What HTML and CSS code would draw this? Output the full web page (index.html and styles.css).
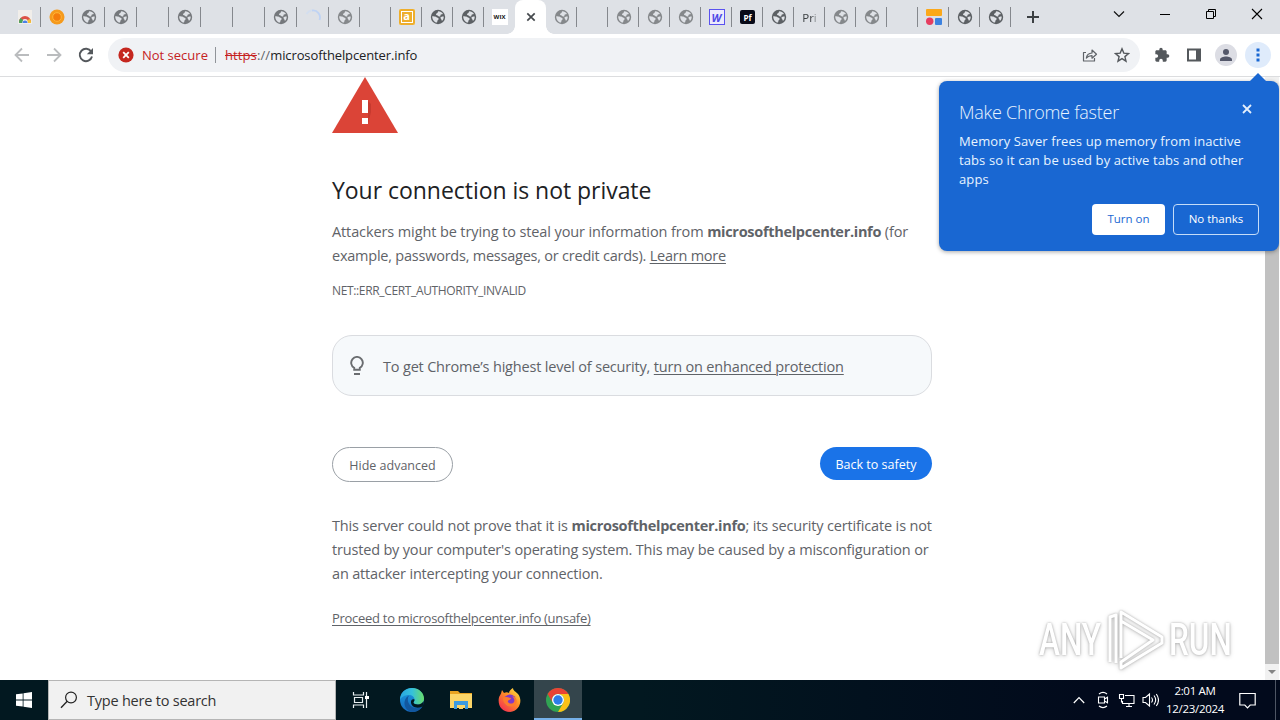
FILE: index.html
```html
<!DOCTYPE html>
<html lang="en">

<head>
    <meta charset="UTF-8">
    <meta name="viewport" content="width=device-width, initial-scale=1.0">
    <title>Privacy error</title>
    <link rel="stylesheet" href="styles.css">
</head>

<body>
    <svg class="defs" width="0" height="0">
        <symbol id="globe" viewBox="0 0 16 16">
            <circle cx="8" cy="8" r="7.2" fill="currentColor" />
            <path d="M2.200 7.200C3.600 7.500 5 7 6.200 8c.9.800 2.300.7 2.500 1.800.2 1-1 1.100-1.300 2-.2.600 0 1.200-.4 1.800C4 13.200 2.200 10.500 2.200 7.200zM8.300 2.200c2 .1 3.600 1 4.600 2.500-.6.800-1.700.4-2.300 1-.5.600.2 1.200-.3 1.600-.6.500-1.500.1-2.100-.4C7.500 6.300 6.300 6.600 6 5.600c-.2-1 1-1.200 1.500-1.800.4-.5.300-1.200.8-1.600zM13.700 7.400c.1 1.700-.5 3.200-1.600 4.400-.7-.3-.5-1.300-1-1.800-.4-.5-.9-.8-.7-1.400.4-1 2.100-1.300 3.300-1.200z" fill="#dee1e6" />
        </symbol>
    </svg>

    <div class="tabstrip">
        <div class="tab"><svg class="favicon" viewBox="0 0 16 16"><path d="M1 1h14v14H1z" fill="#f1eeea" /><path d="M2 13a6 6 0 0 1 12 0h-3a3 3 0 0 0-6 0z" fill="#dd5144" /><path d="M2 14a6 6 0 0 1 1.500-5l2.500 2-1 3z" fill="#48a45c" /><path d="M14 14a6 6 0 0 0-1-4l-2.500 1 .5 3z" fill="#f3c238" /><path d="M5.500 14a2.500 2.500 0 0 1 5 0z" fill="#4a80e8" /></svg></div>
        <div class="tab"><svg class="favicon" viewBox="0 0 16 16"><circle cx="8" cy="8" r="7.500" fill="#f59a1c" /><circle cx="8" cy="8" r="4.300" fill="#f47d0c" stroke="#ffb638" /></svg></div>
        <div class="tab"><svg class="favicon"><use href="#globe" /></svg></div>
        <div class="tab"><svg class="favicon"><use href="#globe" /></svg></div>
        <div class="tab"></div>
        <div class="tab"><svg class="favicon"><use href="#globe" /></svg></div>
        <div class="tab"></div>
        <div class="tab"></div>
        <div class="tab"><svg class="favicon"><use href="#globe" /></svg></div>
        <div class="tab"><svg class="favicon" viewBox="0 0 16 16"><path d="M1.500 5a7 7 0 0 1 5-3.500" fill="none" stroke="#d3deef" stroke-width="1.800" /><path d="M7 1.500a7 7 0 0 1 7.500 9.500" fill="none" stroke="#bfd3f4" stroke-width="1.800" /></svg></div>
        <div class="tab narrow"><svg class="favicon light"><use href="#globe" /></svg></div>
        <div class="tab narrow"></div>
        <div class="tab narrow"><span class="badge at">a</span></div>
        <div class="tab narrow"><svg class="favicon dark"><use href="#globe" /></svg></div>
        <div class="tab narrow"><svg class="favicon dark"><use href="#globe" /></svg></div>
        <div class="tab narrow last"><span class="badge wix">WIX</span></div>
        <div class="tab narrow active"><svg width="10" height="10" viewBox="0 0 10 10"><path d="M1.300 1.300l7.400 7.400M8.700 1.300L1.300 8.700" stroke="#45494d" stroke-width="1.700" /></svg></div>
        <div class="tab narrow"><svg class="favicon light"><use href="#globe" /></svg></div>
        <div class="tab narrow"></div>
        <div class="tab narrow"><svg class="favicon light"><use href="#globe" /></svg></div>
        <div class="tab narrow"><svg class="favicon light"><use href="#globe" /></svg></div>
        <div class="tab narrow"><svg class="favicon light"><use href="#globe" /></svg></div>
        <div class="tab narrow"><span class="badge w">W</span></div>
        <div class="tab narrow"><span class="badge pf">Pf</span></div>
        <div class="tab narrow"><svg class="favicon dark"><use href="#globe" /></svg></div>
        <div class="tab narrow"><span class="tab-title">Pri</span></div>
        <div class="tab narrow"><svg class="favicon light"><use href="#globe" /></svg></div>
        <div class="tab narrow"><svg class="favicon light"><use href="#globe" /></svg></div>
        <div class="tab narrow"></div>
        <div class="tab narrow"><svg class="favicon" viewBox="0 0 16 16"><rect y="0" width="16" height="7" rx="1" fill="#fba81a" /><circle cx="3.700" cy="12.300" r="3.700" fill="#e63d60" /><rect x="9" y="9" width="7" height="7" rx="1" fill="#3c82e0" /></svg></div>
        <div class="tab narrow"><svg class="favicon dark"><use href="#globe" /></svg></div>
        <div class="tab narrow"><svg class="favicon dark"><use href="#globe" /></svg></div>
        <svg class="new-tab" width="12" height="12" viewBox="0 0 12 12"><path d="M6 0v12M0 6h12" stroke="#3c4043" stroke-width="2" /></svg>
        <div class="window-controls">
            <svg width="12" height="28" viewBox="0 0 12 28"><path d="M1 11.500l5 5 5-5" fill="none" stroke="#111" stroke-width="1.200" /></svg>
            <svg width="12" height="28" viewBox="0 0 12 28"><path d="M1 14.500h10" stroke="#000" /></svg>
            <svg width="12" height="28" viewBox="0 0 12 28"><path d="M1.500 11.500h7v7h-7zM3.500 11.500v-2h7v7h-2" fill="none" stroke="#000" /></svg>
            <svg width="12" height="28" viewBox="0 0 12 28"><path d="M1 9l10 10M11 9L1 19" stroke="#000" stroke-width="1.100" /></svg>
        </div>
    </div>

    <div class="toolbar">
        <div class="nav">
            <svg width="16" height="16" viewBox="0 0 16 16"><path d="M15 8H2M8 1.500L1.500 8 8 14.500" fill="none" stroke="#babcbe" stroke-width="1.800" /></svg>
            <svg width="16" height="16" viewBox="0 0 16 16"><path d="M1 8h13M8 1.500L14.500 8 8 14.500" fill="none" stroke="#babcbe" stroke-width="1.800" /></svg>
            <svg width="16" height="16" viewBox="0 0 16 16"><path d="M13.200 4.600A6.200 6.200 0 1 0 14 9.500" fill="none" stroke="#54585c" stroke-width="1.900" /><path d="M15 1v6.200H8.800z" fill="#54585c" /></svg>
        </div>
        <div class="omnibox">
            <svg class="danger" width="16" height="16" viewBox="0 0 16 16"><circle cx="8" cy="8" r="7.600" fill="#c5271f" /><path d="M5.200 5.200l5.600 5.600M10.800 5.200l-5.600 5.600" stroke="#fff" stroke-width="1.800" /></svg>
            <span class="not-secure">Not secure</span>
            <span class="divider"></span>
            <span class="url"><s>https</s><i>://</i>microsofthelpcenter.info</span>
            <svg class="share" width="16" height="16" viewBox="0 0 16 16"><path d="M4 5.500H1.500v8.500h11v-3M4.300 11c.5-3.300 2.500-4.800 5.700-5V3l4.500 4.200-4.500 4V8.600c-2.500 0-4.200.7-5.700 2.400z" fill="none" stroke="#5f6368" stroke-width="1.200" stroke-linejoin="round" /></svg>
            <svg width="16" height="16" viewBox="0 0 16 16"><path d="M8 1.800l1.800 4.300 4.700.4-3.600 3.100 1.100 4.600-4-2.500-4 2.500 1.100-4.600L1.500 6.500l4.700-.4z" fill="none" stroke="#54585c" stroke-width="1.400" /></svg>
        </div>
        <div class="actions">
            <svg width="16" height="16" viewBox="0 0 24 24"><path d="M20.500 11H19V7c0-1.100-.9-2-2-2h-4V3.500a2.500 2.500 0 0 0-5 0V5H4c-1.100 0-2 .9-2 2v3.800h1.500a2.700 2.700 0 0 1 0 5.400H2V20c0 1.100.9 2 2 2h3.800v-1.500a2.700 2.700 0 0 1 5.400 0V22H17c1.100 0 2-.9 2-2v-4h1.500a2.500 2.500 0 0 0 0-5z" fill="#54585c" /></svg>
            <svg width="16" height="16" viewBox="0 0 16 16"><path d="M2 2.500h12v11H2z" fill="none" stroke="#54585c" stroke-width="2" /><path d="M10 2h4v12h-4z" fill="#54585c" /></svg>
            <span class="round profile"><svg width="14" height="14" viewBox="0 0 14 14"><circle cx="7" cy="4" r="3" fill="#54586a" /><path d="M1 13v-1.500C1 9.500 4.500 8.500 7 8.500s6 1 6 3V13z" fill="#54586a" /></svg></span>
            <span class="round more"><svg width="4" height="14" viewBox="0 0 4 14"><path d="M.5 .5h3v3h-3zM.5 5.500h3v3h-3zM.5 10.500h3v3h-3z" fill="#1967d2" /></svg></span>
        </div>
    </div>

    <div class="page">
        <div class="interstitial">
            <svg class="warning" width="66" height="56" viewBox="0 0 66 56"><path d="M33 0l33 56H0z" fill="#db4437" /><path d="M36 24l3 3v8l-3 12z" fill="#c63a2f" /><path d="M30 23h6v13h-6zM30 41h6v6h-6z" fill="#fff" /></svg>
            <h1>Your connection is not private</h1>
            <p class="text">
                <span class="l1">Attackers might be trying to steal your information from <b>microsofthelpcenter.info</b> (for</span><br>
                <span class="l2">example, passwords, messages, or credit cards). <a href="#">Learn more</a></span>
            </p>
            <div class="error-code">NET::ERR_CERT_AUTHORITY_INVALID</div>
            <div class="enhanced">
                <svg width="16" height="20" viewBox="0 0 16 20"><path d="M5.200 13.800v-2A5.800 5.800 0 1 1 10.800 11.800v2z" fill="none" stroke="#6a6d70" stroke-width="1.900" /><path d="M5 17h6v2H5z" fill="#6a6d70" /></svg>
                <span>To get Chrome’s highest level of security, <a href="#">turn on enhanced protection</a></span>
            </div>
            <div class="buttons">
                <button class="secondary">Hide advanced</button>
                <button class="primary">Back to safety</button>
            </div>
            <p class="text details">
                <span class="l3">This server could not prove that it is <b>microsofthelpcenter.info</b>; its security certificate is not</span><br>
                <span class="l4">trusted by your computer's operating system. This may be caused by a misconfiguration or</span><br>
                <span class="l4">an attacker intercepting your connection.</span>
            </p>
            <a class="proceed" href="#">Proceed to microsofthelpcenter.info (unsafe)</a>
        </div>
        <div class="scrollbar">
            <div class="thumb"></div>
            <svg width="14" height="16" viewBox="0 0 14 16"><path d="M3 6h8l-4 4z" fill="#858585" /></svg>
        </div>
        <div class="watermark">
            <span class="any">ANY</span>
            <svg width="60" height="64" viewBox="0 0 60 64"><g fill="none" stroke-linejoin="round"><path d="M4 54V9l6-2v48M15 50V4l41 25v6L15 60v-6l32-22-32-19" stroke="#fff" stroke-width="3" /></g></svg>
            <span class="run">RUN</span>
        </div>
    </div>

    <div class="popup">
        <div class="popup-head">
            <h2>Make Chrome faster</h2>
            <svg width="10" height="10" viewBox="0 0 10 10"><path d="M1 1l8 8M9 1L1 9" stroke="#e4effc" stroke-width="1.800" /></svg>
        </div>
        <p>Memory Saver frees up memory from inactive<br>tabs so it can be used by active tabs and other<br>apps</p>
        <div class="popup-buttons">
            <button class="turn-on">Turn on</button>
            <button class="no-thanks">No thanks</button>
        </div>
    </div>

    <div class="taskbar">
        <div class="start"><svg width="16" height="16" viewBox="0 0 16 16"><path d="M0 2.300L6.700 1.400v6.200H0zM7.500 1.300L16 0v7.600H7.500zM0 8.400h6.700v6.200L0 13.700zM7.500 8.400H16V16l-8.500-1.300z" fill="#fff" /></svg></div>
        <div class="search">
            <svg width="18" height="18" viewBox="0 0 18 18"><circle cx="11" cy="6.500" r="5.400" fill="none" stroke="#222" stroke-width="1.200" /><path d="M7.200 10.300L1 16.800" stroke="#222" stroke-width="1.300" /></svg>
            <span>Type here to search</span>
        </div>
        <div class="app task-view"><svg width="18" height="18" viewBox="0 0 18 18"><path d="M1.500 1v3h10V1M1.500 17v-3h10v3M2.500 6.500h8v5h-8zM14.500 1v16" fill="none" stroke="#e8eef0" stroke-width="1.200" /><path d="M13 5h4v3h-4z" fill="#fff" /></svg></div>
        <div class="app"><svg width="24" height="24" viewBox="0 0 24 24">
            <defs>
                <linearGradient id="edgeTop" x1="0" x2="1"><stop offset="0" stop-color="#29a5e0" /><stop offset=".5" stop-color="#35c1dc" /><stop offset="1" stop-color="#69dc68" /></linearGradient>
                <linearGradient id="edgeLow" x1="0" y1="0" x2="0" y2="1"><stop offset="0" stop-color="#1b9de2" /><stop offset="1" stop-color="#1568bd" /></linearGradient>
            </defs>
            <circle cx="12" cy="12" r="12" fill="url(#edgeLow)" />
            <path d="M0 12C0 4 6 0 12 0c7 0 12 5 12 10.500 0 4-3 6-6 6-2.500 0-4.500-1-4.500-2 0-.7 1-1.200 1-3C14.500 9 12 7 9 7c-4.500 0-8 2.300-9 5z" fill="url(#edgeTop)" />
            <path d="M9 7.500C6 12 9 19 15 20c3 .5 5.500-.3 7.500-1.500C20 22.500 16 24 12 24 7 23 4 19 4.500 14 5 10.500 7 8.500 9 7.500z" fill="#12579f" />
            <path d="M14.500 11.500c0 1.800-1 2.300-1 3 0 1.200 2 2 4.500 2 2.300 0 4.500-1.300 5.500-3.500.5 2 0 4-1 5.500-6 3-12 0-11.500-5 .1-1.700 1.500-3 3.500-2z" fill="#021820" />
        </svg></div>
        <div class="app"><svg width="22" height="20" viewBox="0 0 22 20"><path d="M0 1h8l2 2h12v4H0z" fill="#e8a322" /><path d="M0 4h22v14H0z" fill="#fbd568" /><path d="M4 11h14v8h-3v-4H7v4H4z" fill="#3c9be0" /><path d="M9 16h4v3H9z" fill="#fbd568" /></svg></div>
        <div class="app"><svg width="24" height="24" viewBox="0 0 24 24">
            <defs><linearGradient id="fox" x1="1" y1="0" x2=".2" y2="1"><stop offset="0" stop-color="#fff04a" /><stop offset=".45" stop-color="#ff9325" /><stop offset="1" stop-color="#f42d52" /></linearGradient></defs>
            <path d="M4 2l2 3c2-1 4-.7 5 0 0-2 2-4 4-5 0 3 3 3.500 5 6 5 6 2 17-8 18C4 24 0 18 .7 11 1 8 2.500 7 3 5.500z" fill="url(#fox)" />
            <circle cx="12" cy="12.500" r="6" fill="#8139c8" /><path d="M5 10c3-2 5 0 8 0 0 2-4 2-3 4s5 2 6 0c1-2 0-4-2-6 5 1 6 6 3 9-4 4-12 1-12-7z" fill="#ff7b2c" />
        </svg></div>
        <div class="app current"><svg width="24" height="24" viewBox="0 0 24 24"><circle cx="12" cy="12" r="12" fill="#31a353" /><path d="M1.600 6A12 12 0 0 1 22.400 6H12a6 6 0 0 0-5.200 9z" fill="#e94335" /><path d="M22.400 6A12 12 0 0 1 12 24l5.200-9A6 6 0 0 0 12 6z" fill="#fbc116" /><circle cx="12" cy="12" r="6" fill="#fff" /><circle cx="12" cy="12" r="4.700" fill="#2d7de9" /></svg></div>
        <div class="tray">
            <svg width="12" height="16" viewBox="0 0 12 16"><path d="M.8 11L6 5.500l5.200 5.500" fill="none" stroke="#fff" stroke-width="1.200" /></svg>
            <svg class="meet" width="12" height="18" viewBox="0 0 12 18"><path d="M1.500 6h6v6h-6zM7.500 8l3-1.800v5.600l-3-1.800M2 3c2.500-2 5.500-2 8 0M2 15c2.500 2 5.500 2 8 0" fill="none" stroke="#fff" stroke-width="1.100" /></svg>
            <svg class="net" width="17" height="16" viewBox="0 0 17 16"><path d="M7 3.500h9v8H4.500V9M8 14.500h6M11 11.500v3M1.500 2.500h4v4h-4zM3.500 6.500v4" fill="none" stroke="#fff" stroke-width="1.100" /></svg>
            <svg class="vol" width="17" height="16" viewBox="0 0 17 16"><path d="M1 5.500h2.500l4-3.500v12l-4-3.500H1zM9.500 5.500c1.200 1.500 1.200 3.500 0 5M12 3.500c2 2.700 2 6.300 0 9M14.300 2c2.700 3.700 2.700 8.300 0 12" fill="none" stroke="#fff" stroke-width="1.100" /></svg>
            <div class="clock"><span>2:01 AM</span><span>12/23/2024</span></div>
            <svg class="notify" width="17" height="17" viewBox="0 0 17 17"><path d="M.8 1.500h15.400v11.500h-5L8.500 15.800 5.800 13h-5z" fill="none" stroke="#fff" stroke-width="1.200" /></svg>
        </div>
    </div>
</body>

</html>
```
FILE: styles.css
```css
body {
    margin: 0;
    width: 1280px;
    height: 720px;
    display: flex;
    flex-direction: column;
    position: relative;
    overflow: hidden;
    background: #fff;
    font-family: "Open Sans", "Noto Sans", sans-serif;
    white-space: nowrap;
}

svg {
    display: block;
    flex: none;
}

button {
    font-family: inherit;
    padding: 0;
    box-sizing: border-box;
}

.defs {
    position: absolute;
}

/* tabs */
.tabstrip {
    height: 34px;
    flex: none;
    display: flex;
    background: #dee1e6;
    padding-left: 9px;
}

.tab {
    width: 32px;
    height: 34px;
    flex: none;
    display: flex;
    align-items: center;
    justify-content: center;
    color: #75787c;
    background: linear-gradient(#85888d, #85888d) right 7px / 1px 20px no-repeat;
}

.tab.narrow {
    width: 31px;
}

.tab.last {
    background: none;
}

.tab.active {
    background: #fff;
    border-radius: 8px 8px 0 0;
    position: relative;
}

.tab.active::before,
.tab.active::after {
    content: "";
    position: absolute;
    bottom: 0;
    width: 8px;
    height: 8px;
}

.tab.active::before {
    left: -8px;
    background: radial-gradient(circle at 0 0, transparent 7.5px, #fff 8px);
}

.tab.active::after {
    right: -8px;
    background: radial-gradient(circle at 100% 0, transparent 7.5px, #fff 8px);
}

.favicon {
    width: 16px;
    height: 16px;
}

.favicon.light {
    color: #85888b;
}

.favicon.dark {
    color: #5c6064;
}

.badge {
    width: 16px;
    height: 16px;
    box-sizing: border-box;
    display: flex;
    align-items: center;
    justify-content: center;
    font-weight: bold;
}

.at {
    background: #eeae2c;
    border-radius: 2px;
    color: #fff;
    font-size: 11px;
    line-height: 10px;
    padding-bottom: 2px;
    box-shadow: inset 0 0 0 2px #eeae2c, inset 0 0 0 3px #fff;
}

.wix {
    background: #fff;
    color: #111;
    font-size: 6px;
}

.w {
    border: 1px solid #5a52ef;
    background: #eceafc;
    color: #5049e6;
    font-size: 11px;
    font-style: italic;
}

.pf {
    width: 15px;
    height: 14px;
    background: #080a18;
    border-radius: 2px;
    color: #fff;
    font-size: 8px;
}

.tab-title {
    color: #3c4043;
    font-size: 11.5px;
    -webkit-mask-image: linear-gradient(90deg, #000 60%, rgba(0, 0, 0, 0.3));
}

.new-tab {
    margin: 11px 0 0 16px;
}

.window-controls {
    margin-left: auto;
    margin-right: 17px;
    display: flex;
    gap: 34px;
}

/* toolbar */
.toolbar {
    height: 42px;
    flex: none;
    display: flex;
    align-items: center;
    border-bottom: 1px solid #dcdddf;
}

.nav {
    display: flex;
    gap: 16px;
    margin-left: 14px;
}

.omnibox {
    width: 1032px;
    height: 34px;
    margin-left: 14px;
    box-sizing: border-box;
    display: flex;
    align-items: center;
    background: #f0f2f5;
    border-radius: 17px;
    padding: 0 10px;
    font-size: 13px;
}

.not-secure {
    color: #c5221f;
    margin-left: 8px;
    width: 67px;
}

.divider {
    width: 1px;
    height: 16px;
    background: #909499;
    margin: 0 9px 0 6px;
}

.url {
    color: #202124;
    letter-spacing: -0.12px;
}

.url s {
    color: #c5221f;
    letter-spacing: 0.1px;
}

.url i {
    color: #5f6368;
    font-style: normal;
    letter-spacing: 0.15px;
}

.share {
    margin-left: auto;
    margin-right: 16px;
}

.actions {
    display: flex;
    align-items: center;
    margin-left: 14px;
    gap: 16px;
}

.round {
    display: flex;
    align-items: center;
    justify-content: center;
    border-radius: 50%;
}

.profile {
    width: 22px;
    height: 22px;
    background: #dcdde4;
    margin: 0 -3px;
}

.more {
    width: 26px;
    height: 26px;
    background: #dfebfb;
    margin-left: -5px;
}

/* page */
.page {
    height: 603px;
    flex: none;
    display: flex;
    justify-content: space-between;
    position: relative;
}

.interstitial {
    width: 600px;
    margin-left: 332px;
    color: #5f6368;
    font-size: 14.5px;
}

.interstitial a {
    color: inherit;
    text-underline-offset: 2px;
    text-decoration-thickness: 1px;
}

h1 {
    margin: 42px 0 15px;
    color: #202124;
    font-size: 23px;
    font-weight: 400;
    line-height: 30px;
    letter-spacing: -0.04px;
}

.text {
    margin: 0;
    line-height: 24px;
}

.text b {
    letter-spacing: -0.3px;
}

.l1 {
    letter-spacing: -0.11px;
}

.l2 {
    letter-spacing: -0.23px;
}

.l3 {
    letter-spacing: -0.15px;
}

.l4 {
    letter-spacing: -0.18px;
}

.error-code {
    margin-top: 13px;
    font-size: 12px;
    line-height: 20px;
    letter-spacing: -0.35px;
}

.enhanced {
    height: 61px;
    margin-top: 34px;
    box-sizing: border-box;
    display: flex;
    align-items: center;
    gap: 18px;
    padding-left: 16px;
    background: #f6f9fb;
    border: 1px solid #dadce0;
    border-radius: 20px;
    letter-spacing: -0.18px;
}

.enhanced span {
    padding-top: 2px;
}

.buttons {
    margin-top: 51px;
    display: flex;
    justify-content: space-between;
    align-items: flex-start;
}

.buttons button {
    font-size: 12.5px;
    border-radius: 18px;
    padding-top: 2px;
}

.secondary {
    width: 121px;
    height: 35px;
    border: 1px solid #9aa0a6;
    background: #fff;
    color: #5f6368;
}

.primary {
    width: 112px;
    height: 33px;
    border: 0;
    background: #1a73e8;
    color: #fff;
}

.details {
    margin-top: 32px;
}

.proceed {
    display: inline-block;
    margin-top: 22px;
    font-size: 13px;
    line-height: 20px;
    letter-spacing: -0.28px;
}

.scrollbar {
    width: 14px;
    margin-right: 1px;
    display: flex;
    flex-direction: column;
    background: #f1f1f1;
}

.thumb {
    flex: 1;
    margin-top: 16px;
    background: #c1c1c1;
}

.watermark {
    position: absolute;
    left: 1039px;
    top: 531px;
    display: flex;
    align-items: center;
    color: #fff;
    font-family: Roboto, sans-serif;
    font-size: 45px;
    font-weight: 500;
    line-height: 64px;
    filter: drop-shadow(0 0 1px rgba(0, 0, 0, 0.25)) drop-shadow(0 1px 2px rgba(0, 0, 0, 0.2));
}

.any,
.run {
    width: 64px;
    transform: scaleX(0.7);
    transform-origin: 0 0;
}

.watermark svg {
    margin: 0 3px 0 3px;
}

/* memory saver bubble */
.popup {
    position: absolute;
    left: 939px;
    top: 81px;
    width: 340px;
    height: 170px;
    box-sizing: border-box;
    padding: 20px;
    border-radius: 8px;
    background: #1967d2;
    color: #e8f4ff;
    box-shadow: 0 1px 4px rgba(0, 0, 0, 0.35);
}

.popup::before {
    content: "";
    position: absolute;
    right: 12px;
    top: -8px;
    border: 9px solid transparent;
    border-top: 0;
    border-bottom-color: #1967d2;
}

.popup-head {
    display: flex;
    justify-content: space-between;
    padding-right: 7px;
}

.popup-head svg {
    margin-top: 3px;
}

.popup h2 {
    margin: 0;
    font-size: 18px;
    font-weight: 300;
    line-height: 22px;
    letter-spacing: -0.25px;
}

.popup p {
    margin: 9px 0 15px;
    font-size: 13px;
    line-height: 19px;
    letter-spacing: 0.1px;
}

.popup-buttons {
    display: flex;
    justify-content: flex-end;
    gap: 8px;
}

.popup-buttons button {
    height: 31px;
    padding-bottom: 2px;
    border-radius: 4px;
    font-size: 11.5px;
}

.turn-on {
    width: 73px;
    border: 0;
    background: #fff;
    color: #1967d2;
}

.no-thanks {
    width: 86px;
    border: 1px solid #c5dcf8;
    background: transparent;
    color: #fff;
}

/* taskbar */
.taskbar {
    height: 40px;
    display: flex;
    background: linear-gradient(90deg, #021820 50%, #020a1c 85%);
    color: #fff;
}

.start,
.app {
    width: 48px;
    display: flex;
    align-items: center;
    justify-content: center;
}

.app {
    width: 49px;
}

.task-view {
    margin-right: 2px;
}

.search {
    width: 288px;
    box-sizing: border-box;
    display: flex;
    align-items: center;
    gap: 9px;
    padding-left: 11px;
    background: #f1f1f1;
    border: 1px solid #b5b5b5;
    color: #333;
    font-size: 14.5px;
    letter-spacing: -0.22px;
}

.current {
    width: 48px;
    background: #34454c;
    box-shadow: inset 0 -2px #76b0e8;
}

.tray {
    margin-left: auto;
    display: flex;
    align-items: center;
    padding-right: 4px;
    border-right: 1px solid #4e5664;
    margin-right: 4px;
}

.meet {
    margin-left: 12px;
}

.net {
    margin-left: 9px;
}

.vol {
    margin-left: 7px;
}

.clock {
    width: 66px;
    margin-left: 3px;
    display: flex;
    flex-direction: column;
    align-items: center;
    font-size: 11.5px;
    line-height: 18px;
    letter-spacing: -0.3px;
}

.notify {
    margin: 0 15px 0 11px;
}
```
